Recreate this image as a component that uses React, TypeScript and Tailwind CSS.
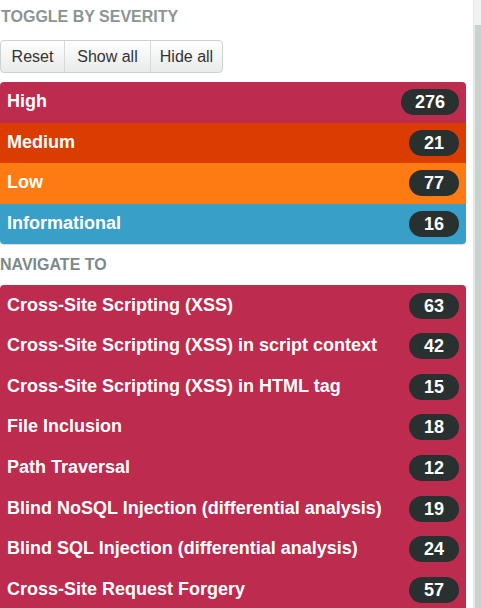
const severities = [
  { label: "High", count: 276, color: "bg-[#bd2b4e]" },
  { label: "Medium", count: 21, color: "bg-[#db3c02]" },
  { label: "Low", count: 77, color: "bg-[#fd7b12]" },
  { label: "Informational", count: 16, color: "bg-[#379fc8]" },
];

const issues = [
  { label: "Cross-Site Scripting (XSS)", count: 63 },
  { label: "Cross-Site Scripting (XSS) in script context", count: 42 },
  { label: "Cross-Site Scripting (XSS) in HTML tag", count: 15 },
  { label: "File Inclusion", count: 18 },
  { label: "Path Traversal", count: 12 },
  { label: "Blind NoSQL Injection (differential analysis)", count: 19 },
  { label: "Blind SQL Injection (differential analysis)", count: 24 },
  { label: "Cross-Site Request Forgery", count: 57 },
];

const Badge = ({ count }: { count: number }) => (
  <span className="min-w-[50px] h-[26px] px-[14px] rounded-full bg-[#283030] text-white text-[18px] font-bold flex items-center justify-center leading-none">
    {count}
  </span>
);

const Row = ({
  label,
  count,
  color,
}: {
  label: string;
  count: number;
  color: string;
}) => (
  <div
    className={`h-[40.6px] flex items-center justify-between pl-[7px] pr-[7px] ${color}`}
  >
    <span className="text-white text-[18px] font-bold leading-none -mt-[2px]">
      {label}
    </span>
    <Badge count={count} />
  </div>
);

export default function App() {
  return (
    <div
      className="w-[481px] h-[608px] overflow-hidden bg-white flex"
      style={{ fontFamily: '"Liberation Sans", Arial, sans-serif' }}
    >
      <div className="w-[466px] shrink-0 pt-[8px]">
        <h2 className="text-[16px] leading-[18px] font-bold text-[#8a9594] uppercase pl-[1px]">
          Toggle by severity
        </h2>

        <div className="mt-[14px] inline-flex h-[33px] rounded-[4px] border border-[#cfd2d1] bg-gradient-to-b from-white to-[#e9ebea] text-[16px] text-[#333]">
          <button className="w-[64px] border-r border-[#d6d9d8]">Reset</button>
          <button className="w-[86px] border-r border-[#d6d9d8]">Show all</button>
          <button className="w-[71px]">Hide all</button>
        </div>

        <div className="mt-[9px] rounded-[4px] overflow-hidden shadow-[0_1px_1px_rgba(0,0,0,0.15)]">
          {severities.map((s) => (
            <Row key={s.label} label={s.label} count={s.count} color={s.color} />
          ))}
        </div>

        <h2 className="mt-[12px] text-[16px] leading-[18px] font-bold text-[#7d8a88] uppercase">
          Navigate to
        </h2>

        <div className="mt-[11px] rounded-t-[4px] overflow-hidden">
          {issues.map((i) => (
            <Row
              key={i.label}
              label={i.label}
              count={i.count}
              color="bg-[#bd2b4e]"
            />
          ))}
        </div>
      </div>

      <div className="ml-auto w-[8px] flex flex-col border-l border-[#e3e7e5]">
        <div className="h-[25px] bg-[#f1f3f2]" />
        <div className="flex-1 bg-[#cad2cf] border-l border-[#e6ebe9]" />
      </div>
    </div>
  );
}
